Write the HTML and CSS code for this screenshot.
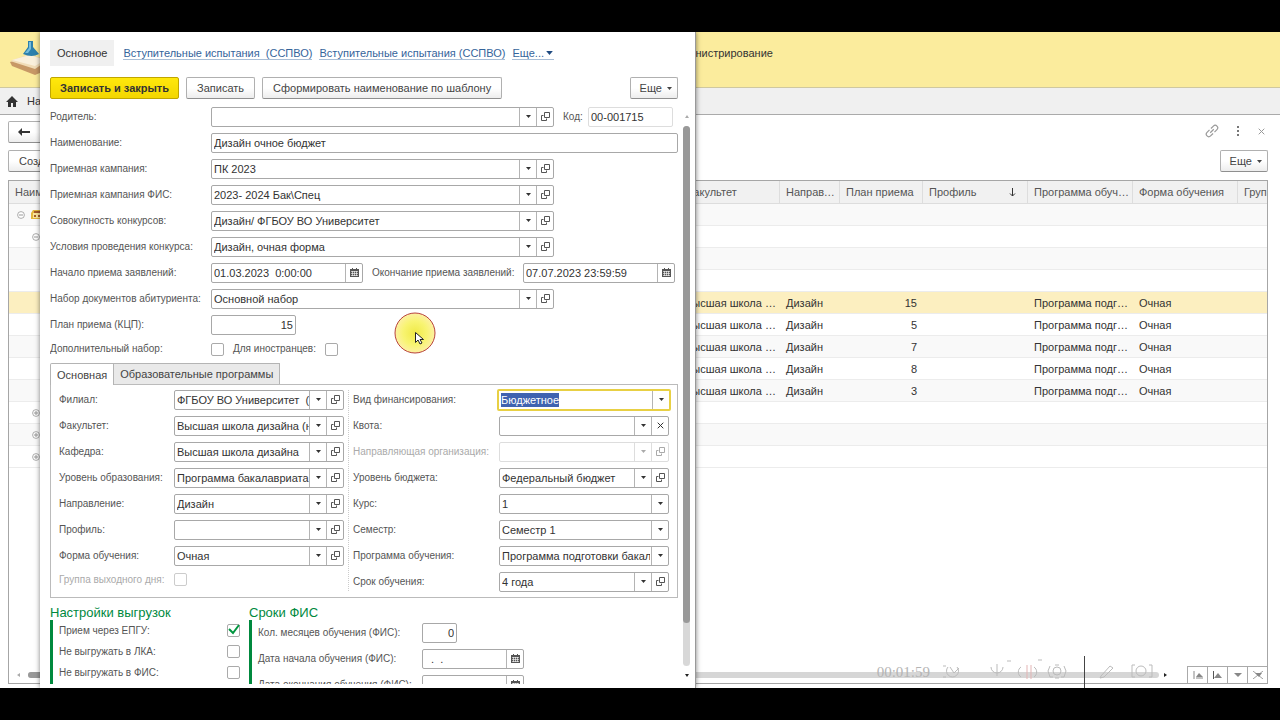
FILE: index.html
```html
<!DOCTYPE html>
<html lang="ru">
<head>
<meta charset="utf-8">
<title>Конкурсная группа</title>
<link rel="stylesheet" href="styles.css">
</head>
<body>
<svg class="defs" aria-hidden="true">
  <symbol id="i-down" viewBox="0 0 5 3"><path d="M0 0h5L2.500 3z" fill="currentColor"/></symbol>
  <symbol id="i-open" viewBox="0 0 9 9"><path d="M3.500 .5h5v5h-5zM2.500 3.500h-2v5h5V6.500" fill="none" stroke="currentColor"/></symbol>
  <symbol id="i-cal" viewBox="0 0 9 9"><path d="M0 1h9v8H0zM2 0h1v2H2zM6 0h1v2H6z" fill="currentColor"/><path d="M1 3.500h7M1 5.500h7M1 7.500h7M2.500 3v5M4.500 3v5M6.500 3v5" stroke="#fff" stroke-width=".6"/></symbol>
  <symbol id="i-x" viewBox="0 0 7 7"><path d="M.7.7l5.600 5.600M6.300.7L.7 6.300" stroke="currentColor" fill="none"/></symbol>
  <symbol id="i-minus" viewBox="0 0 8 8"><circle cx="4" cy="4" r="3.400" fill="#fff" stroke="currentColor" stroke-width=".8"/><path d="M2 4h4" stroke="currentColor"/></symbol>
  <symbol id="i-plus" viewBox="0 0 8 8"><circle cx="4" cy="4" r="3.400" fill="#fff" stroke="currentColor" stroke-width=".8"/><path d="M2 4h4M4 2v4" stroke="currentColor"/></symbol>
</svg>

<div class="stage">
  <header class="topbar">
    <svg class="logo" viewBox="0 0 38 40" aria-hidden="true">
      <path d="M0 22 20 15l17 5v10L25 35 2 26z" fill="#c79866"/><path d="M0 21 19 14l19 6-13 9z" fill="#f1dcb7"/><path d="M2 20 20 15l15 5-10 6z" fill="#faf0dc"/>
      <path d="M18 1h5v6l6 7q-7 4-16 0l5-7z" fill="#2c80ad"/><path d="M19 2h2v7l-3 4h-3l4-5z" fill="#76bddb"/>
    </svg>
    <span class="section">Администрирование</span>
  </header>
  <div class="tabsbar">
    <svg class="home" viewBox="0 0 12 11" aria-hidden="true"><path d="M6 0 12 6h-2v5H7V7H5v4H2V6H0z" fill="#333"/></svg>
    <span>Начальная страница</span>
  </div>

  <main class="list">
    <div class="bar">
      <button class="btn back" aria-label="Назад"><svg viewBox="0 0 12 8"><path d="M4 0v3h8v2H4v3L0 4z" fill="#333"/></svg></button>
      <span class="tools">
        <svg class="link-icon" viewBox="0 0 14 14"><g fill="none" stroke="#999" stroke-width="1.200" transform="rotate(-45 7 7)"><path d="M6 4.500H2.500a2.500 2.500 0 0 0 0 5H6M8 4.500h3.500a2.500 2.500 0 0 1 0 5H8M4.500 7h5"/></g></svg>
        <svg class="dots" viewBox="0 0 3 11"><path d="M0 0h2v2H0zM0 4h2v2H0zM0 8h2v2H0z" fill="#777"/></svg>
        <svg class="ico-x dim"><use href="#i-x"/></svg>
      </span>
    </div>
    <div class="bar">
      <button class="btn">Создать</button>
      <button class="btn more">Еще <svg class="ico-down"><use href="#i-down"/></svg></button>
    </div>
    <div class="grid-box">
      <table class="grid">
        <colgroup><col><col class="c-fac"><col class="c-dir"><col class="c-plan"><col class="c-prof"><col class="c-prog"><col class="c-form"><col class="c-group"></colgroup>
        <thead><tr><th>Наименование</th><th>Факультет</th><th>Направление</th><th>План приема</th><th><span class="sorted">Профиль <svg viewBox="0 0 7 9"><path d="M3.500 0v8M1 5.500l2.500 2.500L6 5.500" fill="none" stroke="#333"/></svg></span></th><th>Программа обучения</th><th>Форма обучения</th><th class="cut">Группа</th></tr></thead>
        <tbody>
          <tr><td><span class="tree"><svg class="knob"><use href="#i-minus"/></svg><svg class="folder" viewBox="0 0 12 11"><path d="M0 4l2-3h8l2 3v6H0z" fill="#e4b83c"/><path d="M2 4h8v5H2z" fill="#fbe69a"/><path d="M3 2h6v2H3zM3 6h2v2H3zM7 6h2v2H7z" fill="#a55b28"/></svg></span></td><td></td><td></td><td></td><td></td><td></td><td></td><td></td></tr>
          <tr><td><span class="tree deep"><svg class="knob"><use href="#i-minus"/></svg></span></td><td></td><td></td><td></td><td></td><td></td><td></td><td></td></tr>
          <tr><td></td><td></td><td></td><td></td><td></td><td></td><td></td><td></td></tr>
          <tr><td></td><td></td><td></td><td></td><td></td><td></td><td></td><td></td></tr>
          <tr class="current"><td></td><td>Высшая школа …</td><td>Дизайн</td><td class="num">15</td><td></td><td>Программа подг…</td><td>Очная</td><td></td></tr>
          <tr><td></td><td>Высшая школа …</td><td>Дизайн</td><td class="num">5</td><td></td><td>Программа подг…</td><td>Очная</td><td></td></tr>
          <tr><td></td><td>Высшая школа …</td><td>Дизайн</td><td class="num">7</td><td></td><td>Программа подг…</td><td>Очная</td><td></td></tr>
          <tr><td></td><td>Высшая школа …</td><td>Дизайн</td><td class="num">8</td><td></td><td>Программа подг…</td><td>Очная</td><td></td></tr>
          <tr><td></td><td>Высшая школа …</td><td>Дизайн</td><td class="num">3</td><td></td><td>Программа подг…</td><td>Очная</td><td></td></tr>
          <tr><td><span class="tree deep"><svg class="knob"><use href="#i-plus"/></svg></span></td><td></td><td></td><td></td><td></td><td></td><td></td><td></td></tr>
          <tr><td><span class="tree deep"><svg class="knob"><use href="#i-plus"/></svg></span></td><td></td><td></td><td></td><td></td><td></td><td></td><td></td></tr>
          <tr><td><span class="tree deep"><svg class="knob"><use href="#i-plus"/></svg></span></td><td></td><td></td><td></td><td></td><td></td><td></td><td></td></tr>
        </tbody>
      </table>
      <div class="hscroll">
        <svg class="dot-left" viewBox="0 0 3 4"><path d="M3 0v4L0 2z" fill="#aaa"/></svg>
        <div class="htrack"><div class="hthumb"></div></div>
        <svg class="dot-right" viewBox="0 0 3 4"><path d="M0 0v4l3-2z" fill="#222"/></svg>
        <div class="pager">
          <button aria-label="В начало"><svg viewBox="0 0 10 8"><path d="M1 0v8M3 7h7" stroke="#888"/><path d="M3 6l3-4 4 4z" fill="#888"/></svg></button>
          <button aria-label="Вверх"><svg viewBox="0 0 10 8"><path d="M1 7l4-5 4 5z" fill="#888"/><path d="M.5 0v8" stroke="#555"/></svg></button>
          <button aria-label="Вниз"><svg viewBox="0 0 10 8"><path d="M1 2h8L5 6z" fill="#888"/></svg></button>
          <button aria-label="В конец"><svg viewBox="0 0 10 8"><path d="M2 2h7L6 6z" fill="#888"/><path d="M0 0l10 8M10 0L0 8" stroke="#888" stroke-width=".8"/></svg></button>
        </div>
      </div>
    </div>
  </main>

  <div class="recorder" aria-hidden="true">
    <span class="time">00:01:59</span>
    <svg viewBox="0 0 230 32"><g fill="none" stroke="#bbb" stroke-width="1"><path d="M13 11a6 6 0 1 0 9 0M15 11l4 6 5-5M8 10h3M8 21h3"/><path d="M56 11a6 6 0 0 0 12 0M62 8v9M62 17v3"/><path d="M86 11a6 6 0 0 0 0 10M99 11a6 6 0 0 1 0 10" /><path d="M92 9v14M96 9v14" stroke="#e3b5b5"/><circle cx="122" cy="15" r="4"/><path d="M115 10l-2 5 2 6h3M129 10l2 5-2 6h-3M120 9h4M120 22h4"/><path d="M166 20l9-10 3 2-9 9-4 1z"/><path d="M200 9h-3v12h3M214 9h3v12h-3"/><circle cx="206" cy="15" r="5"/><path d="M72 5h4M103 4h4"/></g><path d="M149.500 0v32" stroke="#444"/></svg>
  </div>

  <section class="dialog" aria-label="Конкурсная группа">
    <nav class="sections">
      <span class="active">Основное</span>
      <a href="#">Вступительные испытания&nbsp; (ССПВО)</a>
      <a href="#">Вступительные испытания (ССПВО)</a>
      <a href="#">Еще... <svg class="nav-down"><use href="#i-down"/></svg></a>
    </nav>
    <div class="commands">
      <button class="btn primary">Записать и закрыть</button>
      <button class="btn">Записать</button>
      <button class="btn">Сформировать наименование по шаблону</button>
      <button class="btn more">Еще <svg class="ico-down"><use href="#i-down"/></svg></button>
    </div>

    <div class="scroller">
      <div class="form">
        <div class="rows head">
          <div class="row"><label for="parent">Родитель:</label><span class="field long"><input id="parent"><button aria-label="Выбрать"><svg class="ico-down"><use href="#i-down"/></svg></button><button aria-label="Открыть"><svg class="ico-open"><use href="#i-open"/></svg></button></span><label class="second" for="code">Код:</label><span class="field code"><input id="code" value="00-001715" readonly></span></div>
          <div class="row"><label for="name">Наименование:</label><span class="field full"><input id="name" value="Дизайн очное бюджет"></span></div>
          <div class="row"><label for="camp">Приемная кампания:</label><span class="field long"><input id="camp" value="ПК 2023"><button aria-label="Выбрать"><svg class="ico-down"><use href="#i-down"/></svg></button><button aria-label="Открыть"><svg class="ico-open"><use href="#i-open"/></svg></button></span></div>
          <div class="row"><label for="fis">Приемная кампания ФИС:</label><span class="field long"><input id="fis" value="2023- 2024 Бак\Спец"><button aria-label="Выбрать"><svg class="ico-down"><use href="#i-down"/></svg></button><button aria-label="Открыть"><svg class="ico-open"><use href="#i-open"/></svg></button></span></div>
          <div class="row"><label for="set">Совокупность конкурсов:</label><span class="field long"><input id="set" value="Дизайн/ ФГБОУ ВО Университет"><button aria-label="Выбрать"><svg class="ico-down"><use href="#i-down"/></svg></button><button aria-label="Открыть"><svg class="ico-open"><use href="#i-open"/></svg></button></span></div>
          <div class="row"><label for="cond">Условия проведения конкурса:</label><span class="field long"><input id="cond" value="Дизайн, очная форма"><button aria-label="Выбрать"><svg class="ico-down"><use href="#i-down"/></svg></button><button aria-label="Открыть"><svg class="ico-open"><use href="#i-open"/></svg></button></span></div>
          <div class="row"><label for="start">Начало приема заявлений:</label><span class="field date"><input id="start" value="01.03.2023  0:00:00"><button aria-label="Календарь"><svg class="ico-cal"><use href="#i-cal"/></svg></button></span><label class="second wide" for="end">Окончание приема заявлений:</label><span class="field date"><input id="end" value="07.07.2023 23:59:59"><button aria-label="Календарь"><svg class="ico-cal"><use href="#i-cal"/></svg></button></span></div>
          <div class="row"><label for="docs">Набор документов абитуриента:</label><span class="field long"><input id="docs" value="Основной набор"><button aria-label="Выбрать"><svg class="ico-down"><use href="#i-down"/></svg></button><button aria-label="Открыть"><svg class="ico-open"><use href="#i-open"/></svg></button></span></div>
          <div class="row"><label for="plan">План приема (КЦП):</label><span class="field number"><input id="plan" value="15"></span></div>
        </div>
        <div class="row checks"><label for="extra">Дополнительный набор:</label><input type="checkbox" id="extra"><label class="second" for="foreign">Для иностранцев:</label><input type="checkbox" id="foreign"></div>

        <div class="tabs" role="tablist"><button role="tab" aria-selected="true">Основная</button><button role="tab" aria-selected="false">Образовательные программы</button></div>
        <div class="panel">
          <div class="rows left">
            <div class="row"><label for="branch">Филиал:</label><span class="field"><input id="branch" value="ФГБОУ ВО Университет  (головной)"><button aria-label="Выбрать"><svg class="ico-down"><use href="#i-down"/></svg></button><button aria-label="Открыть"><svg class="ico-open"><use href="#i-open"/></svg></button></span></div>
            <div class="row"><label for="fac">Факультет:</label><span class="field"><input id="fac" value="Высшая школа дизайна (направление)"><button aria-label="Выбрать"><svg class="ico-down"><use href="#i-down"/></svg></button><button aria-label="Открыть"><svg class="ico-open"><use href="#i-open"/></svg></button></span></div>
            <div class="row"><label for="dep">Кафедра:</label><span class="field"><input id="dep" value="Высшая школа дизайна"><button aria-label="Выбрать"><svg class="ico-down"><use href="#i-down"/></svg></button><button aria-label="Открыть"><svg class="ico-open"><use href="#i-open"/></svg></button></span></div>
            <div class="row"><label for="level">Уровень образования:</label><span class="field"><input id="level" value="Программа бакалавриата"><button aria-label="Выбрать"><svg class="ico-down"><use href="#i-down"/></svg></button><button aria-label="Открыть"><svg class="ico-open"><use href="#i-open"/></svg></button></span></div>
            <div class="row"><label for="dir">Направление:</label><span class="field"><input id="dir" value="Дизайн"><button aria-label="Выбрать"><svg class="ico-down"><use href="#i-down"/></svg></button><button aria-label="Открыть"><svg class="ico-open"><use href="#i-open"/></svg></button></span></div>
            <div class="row"><label for="prof">Профиль:</label><span class="field"><input id="prof"><button aria-label="Выбрать"><svg class="ico-down"><use href="#i-down"/></svg></button><button aria-label="Открыть"><svg class="ico-open"><use href="#i-open"/></svg></button></span></div>
            <div class="row"><label for="mode">Форма обучения:</label><span class="field"><input id="mode" value="Очная"><button aria-label="Выбрать"><svg class="ico-down"><use href="#i-down"/></svg></button><button aria-label="Открыть"><svg class="ico-open"><use href="#i-open"/></svg></button></span></div>
            <div class="row off short"><label for="weekend">Группа выходного дня:</label><input type="checkbox" id="weekend" disabled></div>
          </div>
          <div class="rows right">
            <div class="row"><label for="fin">Вид финансирования:</label><span class="field focus"><input id="fin" value="Бюджетное"><button aria-label="Выбрать"><svg class="ico-down"><use href="#i-down"/></svg></button></span></div>
            <div class="row"><label for="quota">Квота:</label><span class="field"><input id="quota"><button aria-label="Выбрать"><svg class="ico-down"><use href="#i-down"/></svg></button><button aria-label="Очистить"><svg class="ico-x"><use href="#i-x"/></svg></button></span></div>
            <div class="row off"><label for="org">Направляющая организация:</label><span class="field"><input id="org" disabled><button disabled aria-label="Выбрать"><svg class="ico-down"><use href="#i-down"/></svg></button><button disabled aria-label="Открыть"><svg class="ico-open"><use href="#i-open"/></svg></button></span></div>
            <div class="row"><label for="budget">Уровень бюджета:</label><span class="field"><input id="budget" value="Федеральный бюджет"><button aria-label="Выбрать"><svg class="ico-down"><use href="#i-down"/></svg></button><button aria-label="Открыть"><svg class="ico-open"><use href="#i-open"/></svg></button></span></div>
            <div class="row"><label for="course">Курс:</label><span class="field pick"><select id="course"><option>1</option></select><span class="arrow"><svg class="ico-down"><use href="#i-down"/></svg></span></span></div>
            <div class="row"><label for="term">Семестр:</label><span class="field pick"><select id="term"><option>Семестр 1</option></select><span class="arrow"><svg class="ico-down"><use href="#i-down"/></svg></span></span></div>
            <div class="row"><label for="prog">Программа обучения:</label><span class="field pick"><select id="prog"><option>Программа подготовки бакалавра</option></select><span class="arrow"><svg class="ico-down"><use href="#i-down"/></svg></span></span></div>
            <div class="row"><label for="years">Срок обучения:</label><span class="field"><input id="years" value="4 года"><button aria-label="Выбрать"><svg class="ico-down"><use href="#i-down"/></svg></button><button aria-label="Открыть"><svg class="ico-open"><use href="#i-open"/></svg></button></span></div>
          </div>
        </div>

        <div class="groups">
          <section class="group upload">
            <h2>Настройки выгрузок</h2>
            <div class="group-body">
              <div class="check-line"><label for="epgu">Прием через ЕПГУ:</label><span class="tick"><input type="checkbox" id="epgu" checked><svg viewBox="0 0 13 13"><path d="M2 5l4 4 6-8" fill="none" stroke="#00963f" stroke-width="2"/></svg></span></div>
              <div class="check-line"><label for="lka">Не выгружать в ЛКА:</label><input type="checkbox" id="lka"></div>
              <div class="check-line"><label for="nofis">Не выгружать в ФИС:</label><input type="checkbox" id="nofis"></div>
            </div>
          </section>
          <section class="group terms">
            <h2>Сроки ФИС</h2>
            <div class="group-body rows">
              <div class="row"><label for="months">Кол. месяцев обучения (ФИС):</label><span class="field count"><input id="months" value="0"></span></div>
              <div class="row"><label for="dstart">Дата начала обучения (ФИС):</label><span class="field short-date"><input id="dstart" value="  .  ."><button aria-label="Календарь"><svg class="ico-cal"><use href="#i-cal"/></svg></button></span></div>
              <div class="row"><label for="dend">Дата окончания обучения (ФИС):</label><span class="field short-date"><input id="dend" value="  .  ."><button aria-label="Календарь"><svg class="ico-cal"><use href="#i-cal"/></svg></button></span></div>
            </div>
          </section>
        </div>
      </div>
      <div class="vscroll">
        <svg viewBox="0 0 4 3"><path d="M0 3h4L2 0z" fill="#aaa"/></svg>
        <div class="vtrack"><div class="vthumb"></div></div>
        <svg viewBox="0 0 4 3"><path d="M0 0h4L2 3z" fill="#222"/></svg>
      </div>
    </div>
  </section>

  <svg class="pointer" viewBox="0 0 42 42" aria-hidden="true">
    <defs><radialGradient id="glow"><stop offset="0" stop-color="#f0ea48"/><stop offset=".6" stop-color="#f8f472"/><stop offset="1" stop-color="#fdf0a4"/></radialGradient></defs>
    <circle cx="21" cy="21" r="20" fill="url(#glow)" stroke="#b8433c"/>
    <path d="M21.500 20.500v10l2.500-2.500 2 4 2-1-2-3.500h3.500z" fill="#fff" stroke="#222"/>
  </svg>
</div>
<script>
  const field = document.getElementById('fin');
  field.focus({ preventScroll: true });
  field.select();
</script>
</body>
</html>
```
FILE: styles.css
```css
* { box-sizing: border-box; }
body { margin: 0; background: #000; color: #333; font: 11px/14px "Liberation Sans", Arial, sans-serif; }
button, input, select { font: inherit; color: inherit; margin: 0; }
label { font-size: 10px; }
svg { display: block; flex: none; }
.defs { position: absolute; width: 0; height: 0; }

.stage { position: relative; display: flex; flex-direction: column; height: calc(100vh - 64px); margin: 32px 0; overflow: hidden; background: #fff; }
.topbar { display: flex; align-items: center; flex: none; height: 56px; padding: 0 10px; background: #fbec9d; border-bottom: 1px solid #cfc8a0; }
.topbar .section { flex: 1; padding-left: 622px; padding-bottom: 14px; }
.logo { width: 38px; height: 40px; margin-right: -2px; }
.tabsbar { display: flex; align-items: center; gap: 9px; flex: none; height: 27px; padding: 0 6px; background: #f0f0f0; border-bottom: 1px solid #aaa; }
.home { width: 12px; height: 11px; }

.btn { display: inline-flex; align-items: center; justify-content: center; height: 22px; padding: 0 10px; border: 1px solid #b0b0b0; border-bottom-color: #8f8f8f; border-radius: 2px; background: linear-gradient(#fff 50%, #ededed); color: #444; white-space: nowrap; }
.btn.more { gap: 5px; padding: 0 5px 0 9px; margin-left: auto; }
.btn.primary { padding: 0 9px; background: linear-gradient(#ffe80c, #f3d600); border-color: #c0a600; color: #333; font-weight: bold; }
.ico-down { width: 5px; height: 3px; }
.ico-open, .ico-cal { width: 9px; height: 9px; color: #555; }
.ico-x { width: 7px; height: 7px; }
.dim { color: #999; }

.list { display: flex; flex-direction: column; flex: 1; min-height: 0; padding: 6px 12px 4px 8px; }
.bar { display: flex; align-items: center; flex: none; height: 28px; margin-bottom: 1px; }
.bar .btn { margin-bottom: 6px; }
.bar .more { margin-left: auto; }
.bar + .bar { height: 22px; margin: 0 0 8px; }
.bar + .bar .btn { margin-bottom: 0; }
.bar .back { width: 44px; justify-content: flex-start; padding: 0 9px; }
.back svg { width: 12px; height: 8px; }
.tools { display: flex; align-items: center; gap: 18px; margin-left: auto; padding: 0 3px 8px 0; }
.link-icon { width: 14px; height: 14px; }
.dots { width: 3px; height: 11px; }

.grid-box { display: flex; flex-direction: column; flex: 1; min-height: 0; border: 1px solid #a6a6a6; overflow: hidden; }
.grid { width: 100%; table-layout: fixed; border-collapse: separate; border-spacing: 0; }
.c-fac { width: 101px; }
.c-dir { width: 60px; }
.c-plan { width: 83px; }
.c-prof, .c-prog, .c-form { width: 105px; }
.c-group { width: 29px; }
.grid th, .grid td { height: 22px; padding: 0 1px 0 6px; overflow: hidden; white-space: nowrap; text-overflow: ellipsis; text-align: left; font-weight: normal; border-bottom: 1px solid #ececec; }
.grid th { height: 23px; background: #f1f1f1; color: #555; border-right: 1px solid #ddd; border-color: #ddd; }
.grid th.cut { padding-right: 0; border-right: 0; text-overflow: clip; }
.grid tbody tr:nth-child(odd) { background: #f9f9f9; }
.grid tbody tr.current { background: #fcefc0; }
.grid td.num { padding-right: 6px; text-align: right; }
.sorted { display: flex; align-items: center; justify-content: space-between; padding-right: 10px; }
.sorted svg { width: 7px; height: 9px; }
.tree { display: flex; align-items: center; gap: 6px; padding-left: 2px; color: #999; }
.tree.deep { padding-left: 17px; }
.knob { width: 8px; height: 8px; }
.folder { width: 12px; height: 11px; }
.hscroll { display: flex; align-items: center; height: 17px; margin-top: auto; padding-left: 8px; }
.dot-left, .dot-right { width: 3px; height: 4px; }
.htrack { flex: 1; height: 6px; margin: 0 5px 0 8px; background: #d6d6d6; border-radius: 3px; }
.hthumb { width: 50%; height: 6px; background: #999; border-radius: 3px; }
.pager { display: flex; margin-left: 20px; }
.pager button { display: grid; place-items: center; width: 20px; height: 17px; padding: 0; background: #fff; border: 1px solid #aaa; border-width: 1px 0 0 1px; }
.pager svg { width: 10px; height: 8px; }

.recorder { position: absolute; right: 115px; bottom: 0; display: flex; align-items: center; gap: 5px; color: #999; }
.recorder .time { font: 15px/16px "Liberation Serif", serif; color: #b4b4b4; }
.recorder svg { width: 230px; height: 32px; }

.dialog { position: absolute; top: 0; bottom: 0; left: 40px; width: 656px; display: flex; flex-direction: column; padding: 8px 0 4px 10px; background: #fff; border-right: 1px solid #999; box-shadow: 0 0 5px rgba(0, 0, 0, .5); }
.sections { display: flex; align-items: center; flex: none; height: 26px; padding-right: 16px; }
.sections .active { padding: 6px 7px; margin-right: 9px; background: #f0f0f0; }
.sections a { display: flex; align-items: center; margin-right: 7px; color: #35649b; text-decoration: none; border-bottom: 1px solid #a9bed6; line-height: 12px; }
.nav-down { width: 7px; height: 4px; margin: 0 1px 0 2px; color: #1f4a80; }
.commands { display: flex; gap: 7px; flex: none; margin: 11px 17px 8px 0; }

.scroller { display: flex; flex: 1; min-height: 0; }
.form { flex: 1; min-width: 0; height: 100%; overflow: hidden; }
.rows { display: flex; flex-direction: column; gap: 7px; }
.row { display: flex; align-items: center; height: 19px; color: #555; }
.row label { flex: none; white-space: nowrap; }
.head .row > label:first-child, .checks > label:first-child { width: 161px; }
.head .row > label.second { margin: 0 0 0 9px; width: 25px; }
.head .row > label.wide { width: 151px; }
.field { display: flex; flex: 1; min-width: 0; height: 20px; border: 1px solid #a8a8a8; border-radius: 2px; background: #fff; color: #333; }
.field input { flex: 1; min-width: 0; width: 0; padding: 0 0 0 2px; border: 0; outline: 0; background: transparent; white-space: pre; }
.field button, .arrow { display: grid; place-items: center; flex: none; width: 17px; padding: 0; border: 0; border-left: 1px solid #b4b4b4; background: transparent; color: #333; }
.field.long { flex: 0 0 343px; }
.field.code { flex: 0 0 85px; border-color: #ddd; }
.field.date { flex: 0 0 152px; }
.field.number { flex: 0 0 85px; }
.field.number input, .field.count input { padding-right: 2px; text-align: right; }
.field.pick { display: grid; }
.pick select { grid-area: 1 / 1; width: 100%; min-width: 0; padding: 0 18px 0 2px; border: 0; outline: 0; appearance: none; background: transparent; overflow: hidden; white-space: nowrap; text-overflow: clip; }
.pick .arrow { grid-area: 1 / 1; justify-self: end; pointer-events: none; }
.field.focus { height: 22px; margin: 0 -2px; border: 2px solid #e8d044; }
.focus input::selection { background: #3f62b0; color: #fff; }
.off { color: #aaa; }
.off .field, .off .field button { border-color: #ddd; color: #aaa; }
.off svg { color: #aaa; }

input[type="checkbox"] { appearance: none; flex: none; width: 13px; height: 13px; border: 1px solid #aaa; border-radius: 2px; background: #fff; }
.off input[type="checkbox"] { border-color: #ccc; }
.checks { height: 14px; margin-top: 8px; }
.checks .second { width: 92px; margin-left: 9px; }

.tabs { display: flex; margin-top: 7px; }
.tabs button { height: 21px; padding: 0 6px; border: 1px solid #b4b4b4; border-bottom: 0; background: #e9e9e9; color: #444; }
.tabs button + button { border-left: 0; }
.tabs button[aria-selected="true"] { background: #fff; z-index: 1; margin-bottom: -1px; height: 22px; border-radius: 2px 0 0 0; }
.panel { display: grid; grid-template-columns: 294px 1fr; padding: 5px 8px 6px; border: 1px solid #bbb; }
.left { padding-right: 4px; border-right: 1px dotted #ccc; margin-right: 4px; }
.left label { width: 115px; }
.right label { width: 146px; }
.left .short { height: 15px; }

.groups { display: grid; grid-template-columns: 199px 1fr; margin-top: 7px; }
.group h2 { margin: 0; font-size: 13px; line-height: 15px; font-weight: normal; color: #00893e; }
.group-body { border-left: 3px solid #00893e; padding-left: 6px; color: #555; }
.upload .group-body { padding-right: 9px; min-height: 90px; }
.check-line { display: flex; align-items: center; justify-content: space-between; height: 21px; }
.tick { display: grid; }
.tick input, .tick svg { grid-area: 1 / 1; width: 13px; height: 13px; pointer-events: none; }
.terms .group-body { padding-top: 3px; }
.terms label { width: 164px; }
.field.count { flex: 0 0 35px; }
.field.short-date { flex: 0 0 102px; }

.vscroll { display: flex; flex-direction: column; align-items: center; flex: none; width: 17px; padding: 8px 0 7px; gap: 8px; }
.vscroll svg { width: 4px; height: 3px; }
.vtrack { flex: 1; width: 7px; background: #d8d8d8; border-radius: 4px; }
.vthumb { height: 92%; background: #999; border-radius: 4px; }

.pointer { position: absolute; left: 394px; top: 280px; width: 42px; height: 42px; pointer-events: none; }
```
